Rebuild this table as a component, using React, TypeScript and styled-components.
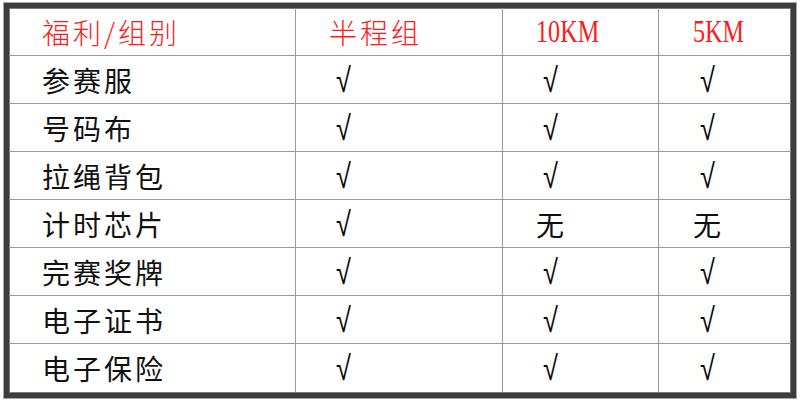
import React from "react";
import styled, { createGlobalStyle } from "styled-components";

const Global = createGlobalStyle`
  html, body { margin: 0; padding: 0; background: #ffffff; }
  body { font-family: "Noto Sans CJK SC", "Noto Sans", sans-serif; }
`;

const Page = styled.div`
  width: 800px;
  height: 401px;
  padding: 3px 0 0 4px;
  box-sizing: border-box;
  background: #ffffff;
`;

const Frame = styled.div`
  width: 792px;
  height: 395px;
  box-sizing: border-box;
  border: 5px solid #3c3c3c;
  box-shadow: 0 0 0 1px #a8a8a8, inset 0 0 0 1px #7a7a7a;
  background: #ffffff;
`;

const Grid = styled.div`
  display: grid;
  grid-template-columns: 287px 207px 156px 1fr;
  grid-template-rows: repeat(8, 48px);
`;

const Cell = styled.div<{ $lastCol?: boolean; $lastRow?: boolean; $head?: boolean }>`
  display: flex;
  align-items: center;
  padding-left: ${(p) => (p.$lastCol ? 34 : 33)}px;
  box-sizing: border-box;
  border-right: ${(p) => (p.$lastCol ? "none" : "1.5px solid #9a9a9a")};
  border-bottom: ${(p) => (p.$lastRow ? "none" : "1.5px solid #9a9a9a")};
  color: ${(p) => (p.$head ? "#ff1a1a" : "#111111")};
  font-family: "Noto Sans CJK SC", "Noto Sans", sans-serif;
  font-size: 28px;
  letter-spacing: 3px;
  font-weight: ${(p) => (p.$head ? 300 : 400)};
  line-height: 1;
  white-space: nowrap;
`;

const Latin = styled.span`
  display: inline-block;
  font-family: "Liberation Serif", serif;
  font-size: 31px;
  letter-spacing: 0;
  transform: scaleX(0.78);
  transform-origin: left center;
`;

const Check = styled.span`
  display: inline-block;
  margin-left: 7px;
  font-size: 34px;
  letter-spacing: 0;
  font-family: "DejaVu Sans", sans-serif;
  font-weight: 300;
  color: #0a0a0a;
  transform: scaleX(0.8);
  transform-origin: left center;
`;

const header = ["福利/组别", "半程组", "10KM", "5KM"];
const rows: [string, string, string, string][] = [
  ["参赛服", "√", "√", "√"],
  ["号码布", "√", "√", "√"],
  ["拉绳背包", "√", "√", "√"],
  ["计时芯片", "√", "无", "无"],
  ["完赛奖牌", "√", "√", "√"],
  ["电子证书", "√", "√", "√"],
  ["电子保险", "√", "√", "√"],
];

export default function App() {
  return (
    <>
      <Global />
      <Page>
        <Frame>
          <Grid>
            {header.map((h, i) => (
              <Cell key={h} $head $lastCol={i === 3}>
                {i >= 2 ? <Latin>{h}</Latin> : h}
              </Cell>
            ))}
            {rows.map((r, ri) =>
              r.map((v, ci) => (
                <Cell
                  key={`${ri}-${ci}`}
                  $lastCol={ci === 3}
                  $lastRow={ri === rows.length - 1}
                >
                  {ci !== 0 && v === "√" ? <Check>{v}</Check> : v}
                </Cell>
              ))
            )}
          </Grid>
        </Frame>
      </Page>
    </>
  );
}
